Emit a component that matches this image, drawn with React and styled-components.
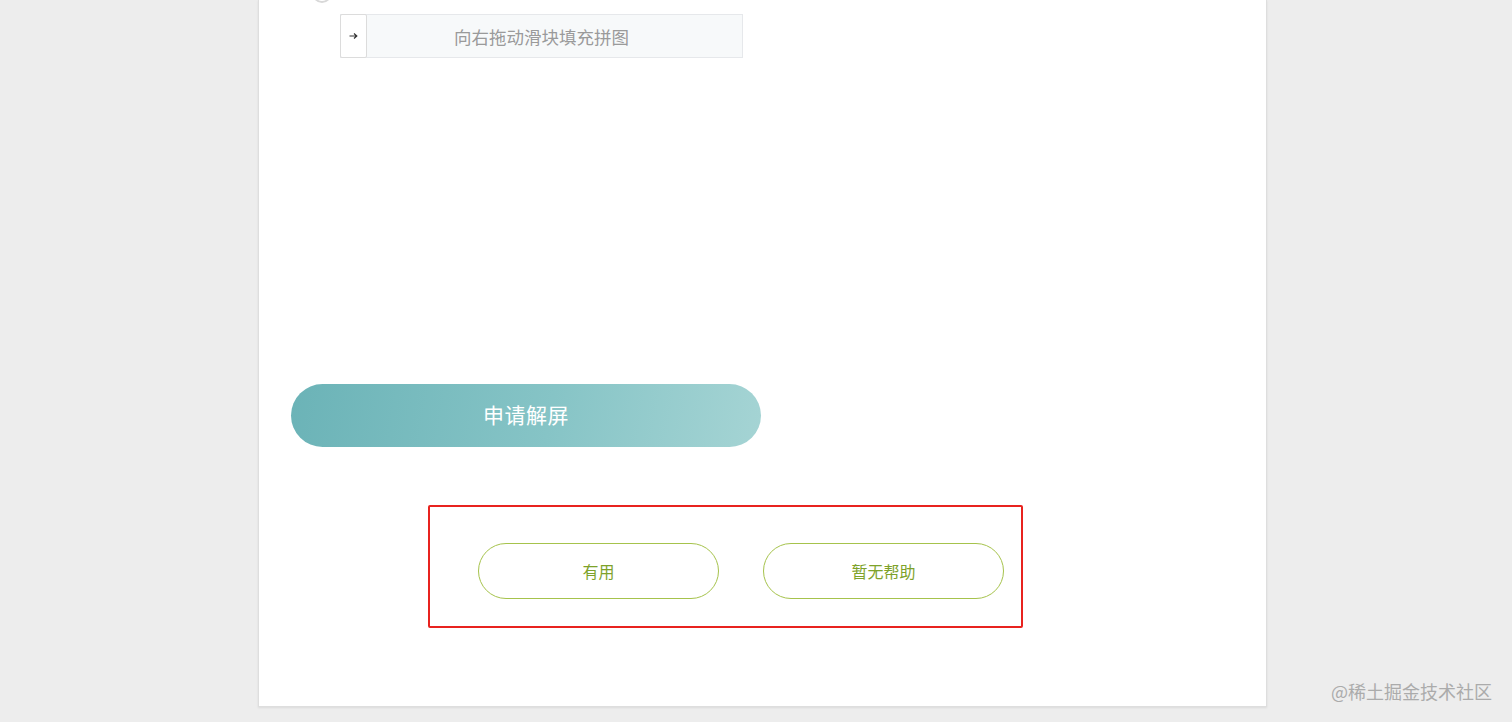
import React from 'react';
import styled, { createGlobalStyle } from 'styled-components';

const GlobalStyle = createGlobalStyle`
  html, body {
    margin: 0;
    padding: 0;
    background: #ededed;
    font-family: 'Noto Sans CJK SC', 'Noto Sans', sans-serif;
    overflow: hidden;
  }
`;

const Page = styled.div`
  width: 1512px;
  height: 722px;
  background: #ededed;
  overflow: hidden;
`;

const Panel = styled.div`
  box-sizing: border-box;
  margin-left: 258px;
  width: 1009px;
  height: 707px;
  background: #fff;
  border: 1px solid #dedede;
  border-top: none;
  box-shadow: 0 1px 2px rgba(0, 0, 0, 0.08);
  display: flex;
  flex-direction: column;
`;

const StepDot = styled.div`
  box-sizing: border-box;
  width: 20px;
  height: 20px;
  margin: -17px 0 0 53px;
  border: 2px solid #d8d8d8;
  border-radius: 50%;
`;

const Slider = styled.div`
  box-sizing: border-box;
  position: relative;
  margin: 11px 0 0 81px;
  width: 403px;
  height: 44px;
  background: #f7f9fa;
  border: 1px solid #e6e8eb;
  display: flex;
  align-items: center;
  justify-content: center;
  font-size: 17.5px;
  color: #9a9a9a;
`;

const Handle = styled.div`
  box-sizing: border-box;
  position: absolute;
  left: -1px;
  top: -1px;
  width: 27px;
  height: 44px;
  background: #fff;
  border: 1px solid #dcdcdc;
  border-radius: 2px;
  display: flex;
  align-items: center;
  justify-content: center;
  color: #444;
`;

const UnlockButton = styled.button`
  margin: 326px 0 0 32px;
  width: 470px;
  height: 63px;
  border: none;
  border-radius: 32px;
  background: linear-gradient(100deg, #6bb3b7 0%, #86c4c6 55%, #a5d4d4 100%);
  color: #fff;
  font-family: inherit;
  font-size: 21px;
  letter-spacing: 0.5px;
  display: flex;
  align-items: center;
  justify-content: center;
  padding: 0 0 4px;
`;

const FeedbackBox = styled.div`
  box-sizing: border-box;
  margin: 58px 0 0 169px;
  width: 595px;
  height: 123px;
  border: 2px solid #e8231f;
  border-radius: 2px;
  display: flex;
  align-items: flex-start;
  padding: 36px 0 0 48px;
  gap: 44px;
`;

const FeedbackButton = styled.button`
  box-sizing: border-box;
  width: 241px;
  height: 56px;
  border: 1px solid #a6c34c;
  border-radius: 28px;
  background: #fff;
  color: #7ea22a;
  font-family: inherit;
  font-size: 16px;
  display: flex;
  align-items: center;
  justify-content: center;
`;

const Watermark = styled.div`
  position: absolute;
  left: 1331px;
  top: 678px;
  font-size: 18px;
  color: #ababab;
  white-space: nowrap;
`;

const App = () => {
  return (
    <Page>
      <GlobalStyle />
      <Panel>
        <StepDot />
        <Slider>
          <Handle>
            <svg width="9" height="8" viewBox="0 0 9 8" fill="none">
              <path d="M0.5 4h7M5 1.5L7.8 4 5 6.5" stroke="#333" strokeWidth="1.2" />
            </svg>
          </Handle>
          向右拖动滑块填充拼图
        </Slider>
        <UnlockButton>申请解屏</UnlockButton>
        <FeedbackBox>
          <FeedbackButton>有用</FeedbackButton>
          <FeedbackButton>暂无帮助</FeedbackButton>
        </FeedbackBox>
      </Panel>
      <Watermark>@稀土掘金技术社区</Watermark>
    </Page>
  );
};

export default App;
